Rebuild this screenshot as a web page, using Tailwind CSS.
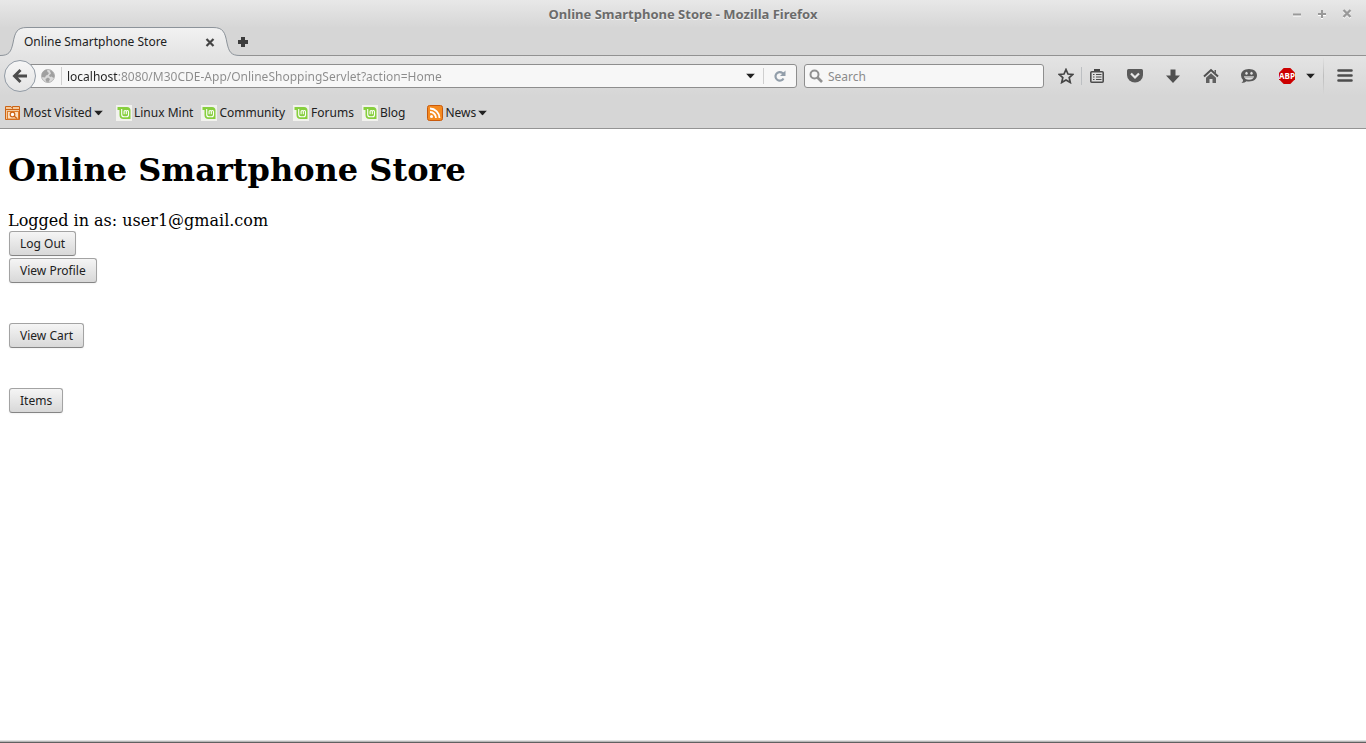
<!DOCTYPE html>
<html lang="en">
<head>
<meta charset="utf-8">
<title>Online Smartphone Store</title>
<script src="https://cdn.jsdelivr.net/npm/@tailwindcss/browser@4"></script>
</head>
<body class="flex min-h-screen flex-col bg-white font-['Noto_Sans',sans-serif] text-xs text-[#212121]">
<svg class="hidden">
  <symbol id="mint" viewBox="0 0 16 16">
    <rect width="16" height="16" fill="#f2f2ee"/>
    <path d="M1.500 2H11q3.500 0 3.500 3.500V14H7.500Q3.500 14 3.500 10V5H1.500z" fill="#87cf3e"/>
    <path d="M5.700 4V9.500Q5.700 11.800 8 11.800H10.500Q12.500 11.800 12.500 9.800V6.800Q12.500 5.500 11.400 5.500T10.300 6.800V9.300M10.300 6.800Q10.300 5.500 9.200 5.500T8.100 6.800V9.300" fill="none" stroke="#fff" stroke-width="1.100"/>
  </symbol>
  <symbol id="caret" viewBox="0 0 9 5"><path d="M0 0h9L4.500 5z" fill="#212121"/></symbol>
</svg>

<header class="border-b border-[#949494] bg-[#d6d6d6]">
  <div class="flex h-7 items-center bg-linear-to-b from-[#e8e8e8] to-[#d6d6d6]">
    <div class="flex-1 pl-[11px]"></div>
    <div class="pt-[2px] text-[13px] font-bold text-[#6b6b6b] [text-shadow:0_1px_0_#f5f5f5]">Online Smartphone Store - Mozilla Firefox</div>
    <div class="flex flex-1 justify-end gap-[9px] pr-[11px]">
      <button aria-label="Minimize" class="size-4"><svg viewBox="0 0 16 16"><path d="M4 9.500h8" stroke="#fff" stroke-width="2"/><path d="M4 8.500h8" stroke="#999" stroke-width="2"/></svg></button>
      <button aria-label="Maximize" class="size-4"><svg viewBox="0 0 16 16"><path d="M4 9h8M8 5v8" stroke="#fff" stroke-width="2"/><path d="M4 8h8M8 4v8" stroke="#999" stroke-width="2"/></svg></button>
      <button aria-label="Close window" class="size-4"><svg viewBox="0 0 16 16"><path d="M4.500 5l7 7m0-7l-7 7" stroke="#fff" stroke-width="2"/><path d="M4.500 4l7 7m0-7l-7 7" stroke="#999" stroke-width="2.400"/></svg></button>
    </div>
  </div>

  <div class="flex h-7 items-end">
    <div class="relative flex h-[29px] w-[240px] items-center pl-6">
      <svg class="absolute left-0 top-0 h-[29px] w-[240px]" viewBox="0 0 240 29">
        <defs><linearGradient id="tabfill" x2="0" y2="1"><stop stop-color="#f2f2f2"/><stop offset="1" stop-color="#e4e4e4"/></linearGradient></defs>
        <path d="M0 28.500C9 28.500 11 25 13 16C15 5 17 .5 27 .5H213C223 .5 225 5 227 16C229 25 231 28.500 240 28.500V29H0z" fill="url(#tabfill)"/>
        <path d="M0 28.500C9 28.500 11 25 13 16C15 5 17 .5 27 .5H213C223 .5 225 5 227 16C229 25 231 28.500 240 28.500" fill="none" stroke="#8c939a"/>
      </svg>
      <span class="relative w-[180px]">Online Smartphone Store</span>
      <button aria-label="Close tab" class="relative h-3 w-3"><svg viewBox="0 0 12 12"><path d="M2.500 3l7 7m0-7l-7 7" stroke="#454545" stroke-width="2.200"/></svg></button>
    </div>
    <div class="flex h-7 flex-1 items-center border-b border-[#929292]">
      <button aria-label="New tab" class="relative -ml-[3px] h-3 w-3"><svg viewBox="0 0 12 12"><path d="M1 6h10M6 1v10" stroke="#3c3c3c" stroke-width="4"/></svg></button>
    </div>
  </div>

  <div class="flex h-10 items-center bg-linear-to-b from-[#e4e4e4] to-[#d6d6d6] pl-1">
    <button aria-label="Back" class="z-10 flex size-8 shrink-0 items-center justify-center rounded-full border border-[#929ba5] bg-linear-to-b from-[#f6f6f6] to-[#e4e4e4]">
      <svg class="size-4" viewBox="0 0 16 16"><path d="M8.500 2L2.500 8L8.500 14M3 8H15" fill="none" stroke="#4c4c4c" stroke-width="2.900"/></svg>
    </button>
    <div class="-ml-4 flex h-6 flex-1 items-center rounded-[3px] border border-[#8e8e8e] bg-[#f7f7f7] pl-5">
      <svg class="size-[14px]" viewBox="0 0 14 14"><circle cx="7" cy="7" r="6.500" fill="#dadada" stroke="#b4b4b4"/><path d="M1 4.500Q3 .5 6 .8L6.500 3L8 4L6.500 6L5 6.500L4 8.500L1 8zM8.500 1Q12.500 2 13.500 7L12.500 9L10.500 7.500L9 8L8 6.500L10 4.500zM4.500 10L7 8.500L9 10L7.500 13L5 12.500z" fill="#a0a0a0"/></svg>
      <span class="ml-[6px] h-[18px] w-px bg-[#d0d0d0]"></span>
      <input type="text" aria-label="Address" value="localhost:8080/M30CDE-App/OnlineShoppingServlet?action=Home" class="ml-[5px] h-5 min-w-0 flex-1 bg-linear-to-r from-[#212121] from-[51px] to-[#8b8b8b] to-[51px] bg-clip-text text-transparent outline-none">
      <button aria-label="Show history" class="h-5 w-[17px]"><svg class="h-[6px] w-[9px]" viewBox="0 0 9 5"><use href="#caret"/></svg></button>
      <span class="h-4 w-px bg-[#cfcfcf]"></span>
      <button aria-label="Reload" class="ml-[9px] mr-[9px] size-[14px]"><svg viewBox="0 0 14 14"><path d="M10.500 9.500A4.300 4.300 0 1 1 9.500 4L11 5" fill="none" stroke="#929eaa" stroke-width="2.200"/><path d="M12.500 1.500v5.500H7z" fill="#929eaa"/></svg></button>
    </div>
    <label class="ml-[7px] flex h-6 w-60 items-center rounded-[3px] border border-[#8e8e8e] bg-[#f7f7f7] pl-1">
      <svg class="size-[14px]" viewBox="0 0 14 14"><circle cx="5.500" cy="5.500" r="4" fill="none" stroke="#919191" stroke-width="2"/><path d="M8.500 8.500L13 13" stroke="#919191" stroke-width="2.600"/></svg>
      <input type="text" aria-label="Search" placeholder="Search" class="ml-[5px] h-5 min-w-0 flex-1 outline-none placeholder:text-[#8b8b8b]">
    </label>
    <button aria-label="Bookmark this page" class="ml-2 flex w-7 justify-center"><svg class="size-4" viewBox="0 0 16 16"><path d="M8 1.500L10 6L14.800 6.500L11.200 9.600L12.300 14.500L8 12L3.700 14.500L4.800 9.600L1.200 6.500L6 6z" fill="none" stroke="#454545" stroke-width="1.700"/></svg></button>
    <span class="ml-px h-[18px] w-px bg-[#bcbfc2]"></span>
    <button aria-label="Bookmarks" class="flex w-[30px] justify-center"><svg class="size-4" viewBox="0 0 16 16"><path d="M5 3V1h6v2" fill="#454545"/><rect x="1.800" y="3.800" width="12.400" height="10.400" rx="1" fill="#dedede" stroke="#4c4c4c" stroke-width="1.600"/><path d="M4 6.500h1.500M7 6.500h5.500M4 9h1.500M7 9h5.500M4 11.500h1.500M7 11.500h5.500" stroke="#4c4c4c" stroke-width="1.100"/></svg></button>
    <button aria-label="Save to Pocket" class="ml-1 flex w-[38px] justify-center"><svg class="size-4" viewBox="0 0 16 16"><path d="M1.500 1h13Q16 1 16 2.500V7a8 7.500 0 0 1-16 0V2.500Q0 1 1.500 1z" fill="#5a5a5a"/><path d="M4 5.500l4 4l4-4" fill="none" stroke="#e8e8e8" stroke-width="2.200"/></svg></button>
    <button aria-label="Downloads" class="flex w-[38px] justify-center"><svg class="size-4" viewBox="0 0 16 16"><path d="M5.500 1.500h5v6H15l-7 7.500l-7-7.500h4.500z" fill="#505050"/></svg></button>
    <button aria-label="Home" class="flex w-[38px] justify-center"><svg class="size-4" viewBox="0 0 16 16"><path d="M1 8.500L8 2l7 6.500" fill="none" stroke="#505050" stroke-width="2"/><path d="M11.500 2H13v4h-1.500zM8 5.200l5 4.600V15H9.500v-4h-3v4H3V9.800z" fill="#606060"/></svg></button>
    <button aria-label="Start a conversation" class="flex w-[38px] justify-center"><svg class="size-4" viewBox="0 0 16 16"><path d="M8 1c5 0 8 2.800 8 6.300s-3 6.200-8 6.200q-1.500 0-2.500-.3Q4 15 .5 15Q2.300 13.500 2.100 12Q0 10 0 7.300C0 3.800 3 1 8 1z" fill="#585858"/><path d="M3 8.300h10Q12.300 11.800 8 11.800T3 8.300z" fill="#dedede"/><path d="M4 9.200h8" stroke="#8a8a8a" stroke-width=".6"/><ellipse cx="5.500" cy="5.300" rx="1.200" ry="1.500" fill="#dedede"/><ellipse cx="10.500" cy="5.300" rx="1.200" ry="1.500" fill="#dedede"/></svg></button>
    <button aria-label="Adblock Plus" class="flex w-[38px] justify-center"><svg class="size-4" viewBox="0 0 16 16"><path d="M4.700 0h6.600L16 4.700v6.600L11.300 16H4.700L0 11.300V4.700z" fill="#cc0000"/><text x="8" y="11" text-anchor="middle" font-size="8" font-weight="bold" font-family="Open Sans, sans-serif" fill="#fff">ABP</text></svg></button>
    <button aria-label="Adblock Plus menu" class="w-[9px]"><svg class="h-[6px] w-[9px]" viewBox="0 0 9 5"><use href="#caret"/></svg></button>
    <span class="ml-2 h-9 w-px bg-linear-to-b from-[#e0e0e0] via-[#bdbdbd] to-[#d6d6d6]"></span>
    <button aria-label="Open menu" class="flex w-[42px] justify-center"><svg class="size-4" viewBox="0 0 16 16"><path d="M1.500 2.500h13M1.500 7.500h13M1.500 12.500h13" stroke="#4c4c4c" stroke-width="2.600" stroke-linecap="round"/></svg></button>
  </div>

  <nav aria-label="Bookmarks toolbar" class="flex h-8 items-center pl-1 pt-px">
    <button class="flex items-center gap-[2px]">
      <svg class="size-[17px]" viewBox="0 0 17 17"><path d="M1.500 15.500V2.500h5.500l1.500 2V2.500h7v13z" fill="#f3c99c" stroke="#cc6314"/><path d="M2 5.500h13" stroke="#cc6314"/><rect x="3.500" y="7.500" width="11" height="7.500" fill="#fbdfc0" stroke="#dd7c2a"/><circle cx="8.500" cy="10.500" r="2.300" fill="#fff" stroke="#cc6314" stroke-width="1.200"/><path d="M10 12l3 2.500" stroke="#cc6314" stroke-width="1.500"/></svg>
      <span>Most Visited</span><svg class="h-[6px] w-[9px]" viewBox="0 0 9 5"><use href="#caret"/></svg>
    </button>
    <a href="#" class="ml-[13px] flex items-center gap-[2px]"><svg class="size-4"><use href="#mint"/></svg>Linux Mint</a>
    <a href="#" class="ml-2 flex items-center gap-[2px]"><svg class="size-4"><use href="#mint"/></svg>Community</a>
    <a href="#" class="ml-2 flex items-center gap-[2px]"><svg class="size-4"><use href="#mint"/></svg>Forums</a>
    <a href="#" class="ml-2 flex items-center gap-[2px]"><svg class="size-4"><use href="#mint"/></svg>Blog</a>
    <button class="ml-[22px] flex items-center gap-[2px]">
      <svg class="size-4" viewBox="0 0 16 16"><rect x=".5" y=".5" width="15" height="15" rx="2" fill="#f58a20" stroke="#c95a0c"/><circle cx="4.500" cy="11.500" r="1.500" fill="#fff"/><path d="M3 7a6 6 0 0 1 6 6M3 3.500a9.500 9.500 0 0 1 9.500 9.500" fill="none" stroke="#fff" stroke-width="1.800"/></svg>
      <span>News</span><svg class="h-[6px] w-[9px]" viewBox="0 0 9 5"><use href="#caret"/></svg>
    </button>
  </nav>
</header>

<main class="flex flex-1 flex-col items-start px-2 pt-[22px] font-['DejaVu_Serif',serif] text-base/[19px] text-black">
  <h1 class="mb-[22px] text-[32px]/[38px] font-bold">Online Smartphone Store</h1>
  <p>Logged in as: user1@gmail.com</p>
  <div class="flex flex-col items-start px-px pt-px font-['Noto_Sans',sans-serif] text-xs text-[#212121]">
    <button class="mb-[2px] h-[25px] rounded-[3px] border border-[#a3a3a3] border-b-[#858585] bg-linear-to-b from-[#f5f5f5] to-[#d8d8d8] px-[10px] shadow-xs">Log Out</button>
    <button class="mb-10 h-[25px] rounded-[3px] border border-[#a3a3a3] border-b-[#858585] bg-linear-to-b from-[#f5f5f5] to-[#d8d8d8] px-[10px] shadow-xs">View Profile</button>
    <button class="mb-10 h-[25px] rounded-[3px] border border-[#a3a3a3] border-b-[#858585] bg-linear-to-b from-[#f5f5f5] to-[#d8d8d8] px-[10px] shadow-xs">View Cart</button>
    <button class="h-[25px] rounded-[3px] border border-[#a3a3a3] border-b-[#858585] bg-linear-to-b from-[#f5f5f5] to-[#d8d8d8] px-[10px] shadow-xs">Items</button>
  </div>
</main>
<footer><div class="h-px bg-[#e0e0e0]"></div><div class="h-px bg-[#b8b8b8]"></div><div class="h-px bg-[#606060]"></div></footer>
</body>
</html>
